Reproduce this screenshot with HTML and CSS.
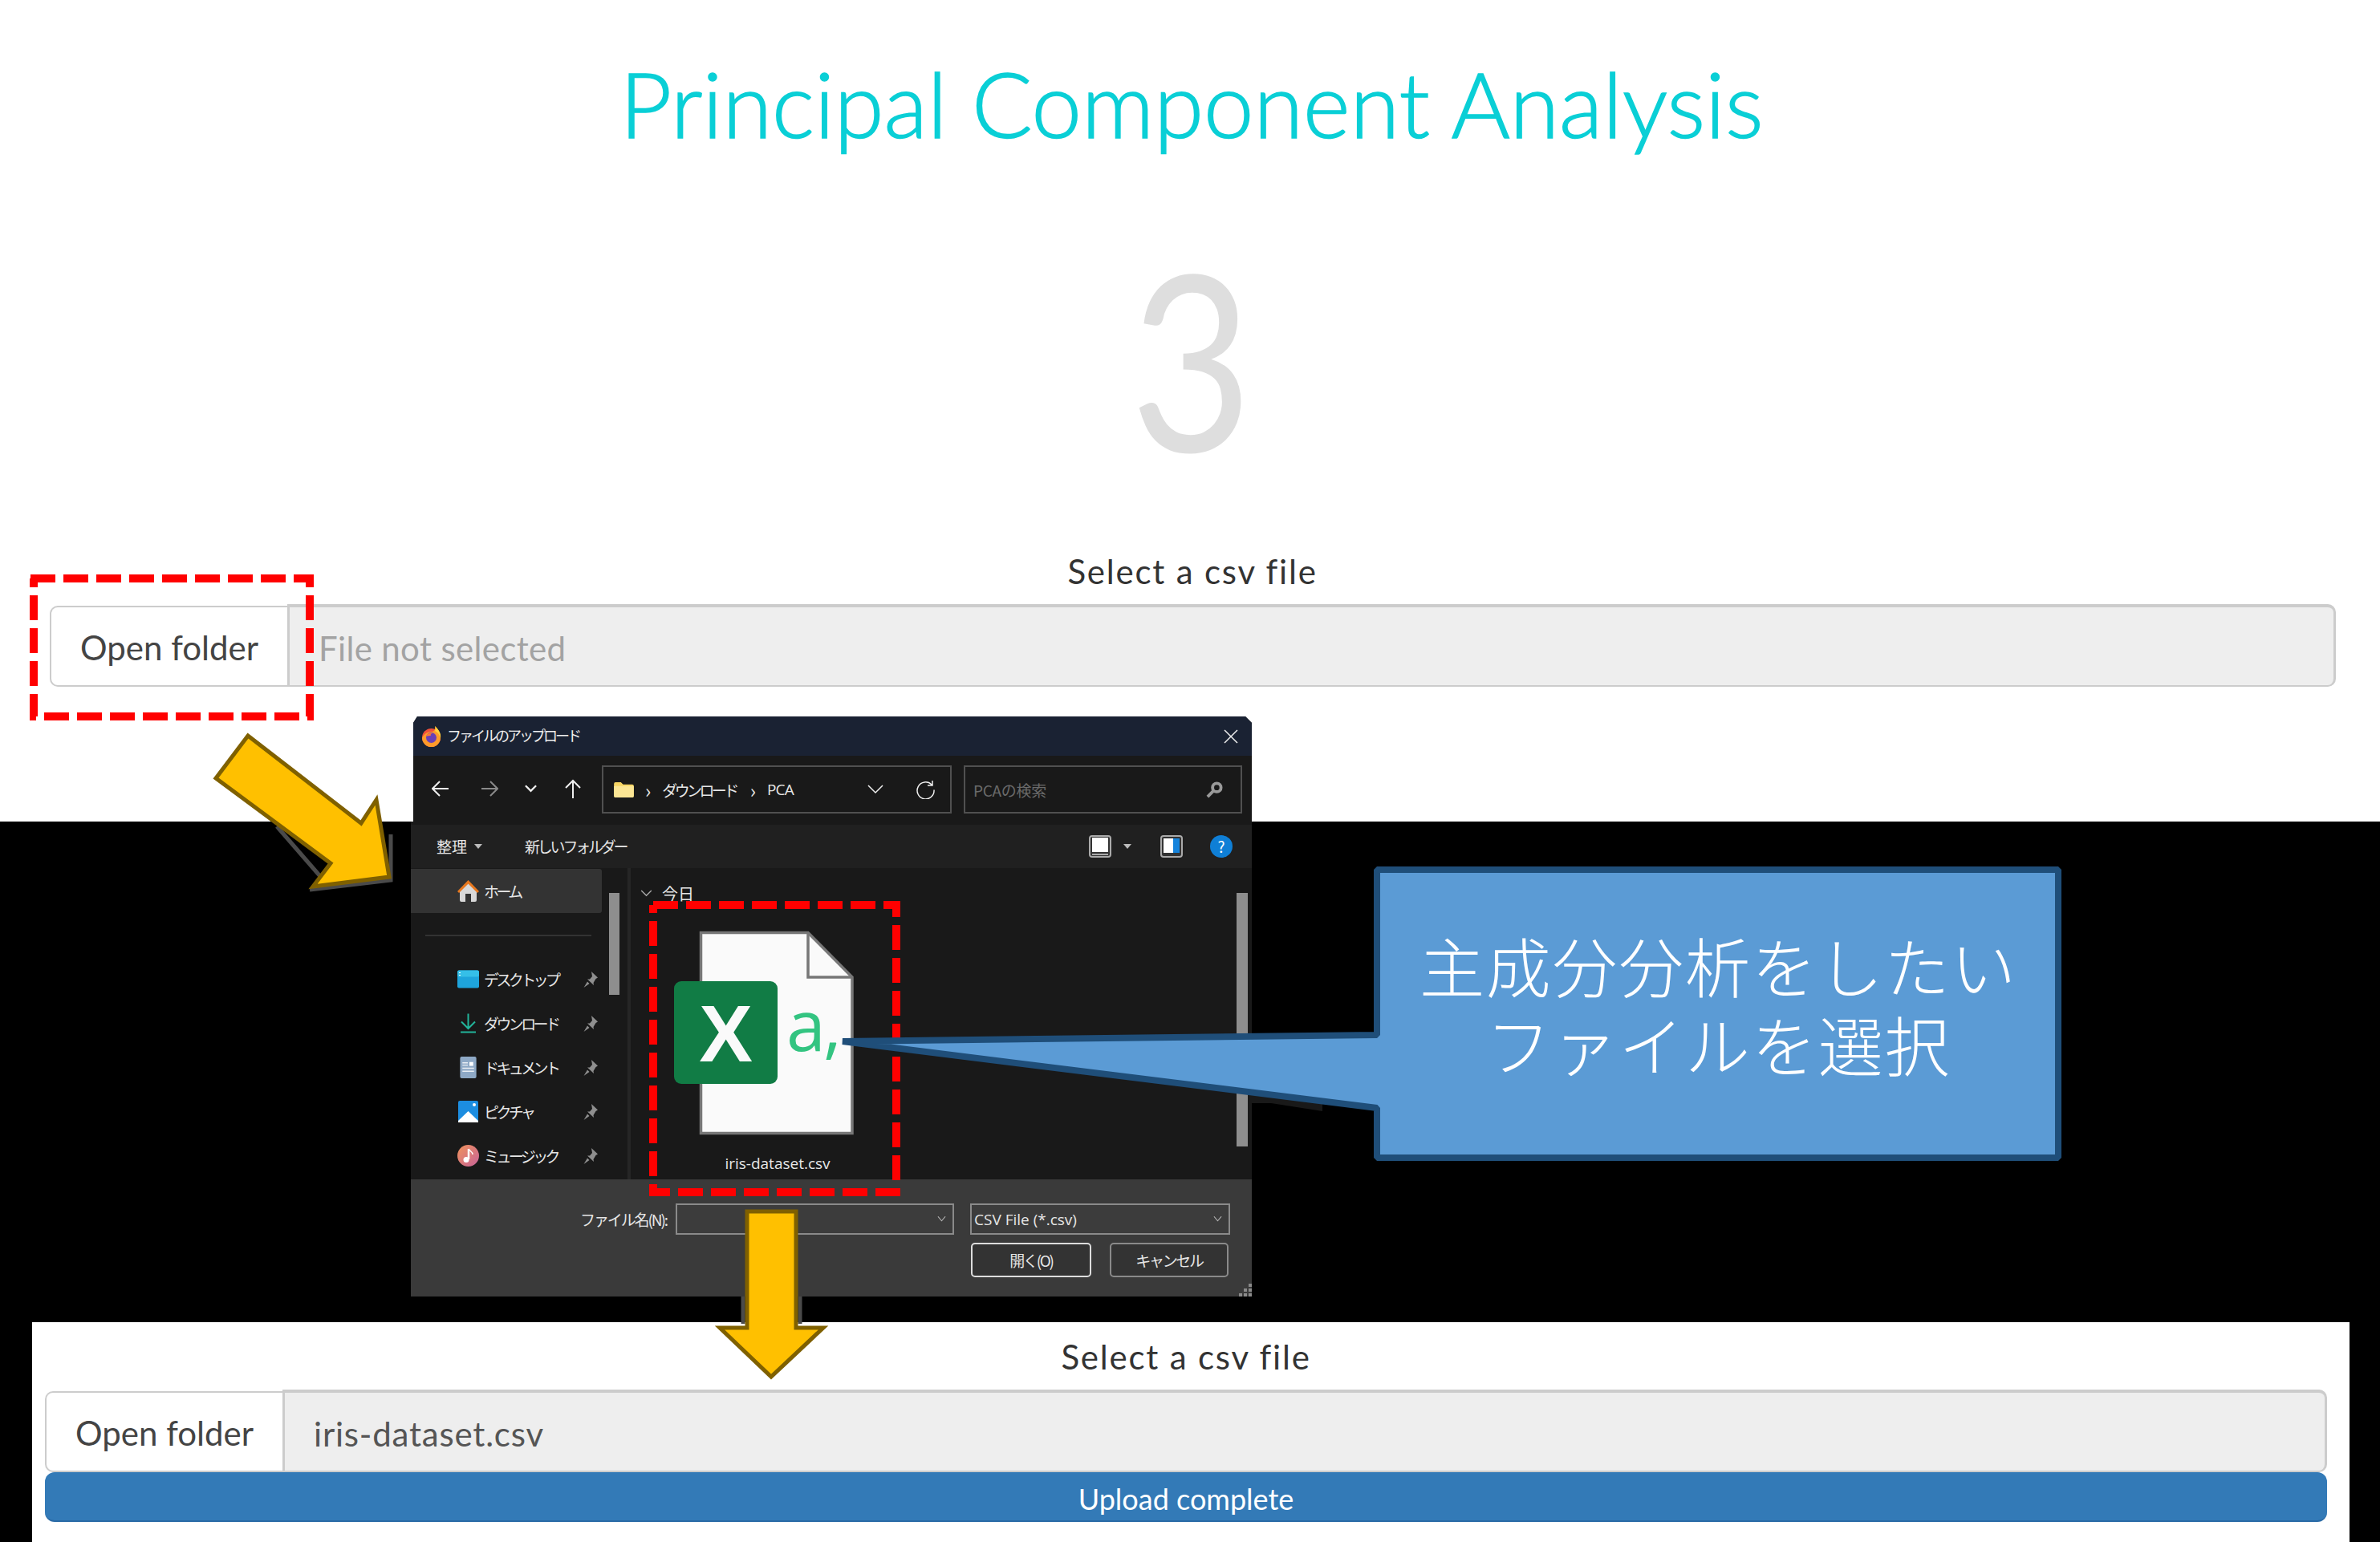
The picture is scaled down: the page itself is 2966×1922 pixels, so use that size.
FILE: index.html
```html
<!DOCTYPE html>
<html lang="en">
<head>
<meta charset="utf-8">
<title>Principal Component Analysis</title>
<link rel="stylesheet" href="styles.css">
</head>
<body>
<div class="page">
  <section class="top">
    <h1 class="title">Principal Component Analysis</h1>
    <div class="step">3</div>
    <label class="label label-top">Select a csv file</label>
    <div class="group group-top">
      <div class="open">Open folder</div>
      <div class="field placeholder">File not selected</div>
    </div>
  </section>

  <div class="band"></div>

  <section class="lower">
    <label class="label">Select a csv file</label>
    <div class="group">
      <div class="open">Open folder</div>
      <div class="field value">iris-dataset.csv</div>
    </div>
    <div class="bar">Upload complete</div>
  </section>

  <div class="dialog">
    <div class="d-title">
      <svg class="ff" viewBox="0 0 26 26">
        <circle cx="12.5" cy="14.5" r="11.5" fill="#f0503a"/>
        <path d="M1 14.5A11.5 11.5 0 0 0 24 14.5C24 8 21 4 17 0c1 4-1 6-3 7-5 0-9 1-13 7.500z" fill="#ff9a2a"/>
        <path d="M17 0c4 4 8 8 7 15-1-4-3-7-7-9 1-2 1-4 0-6z" fill="#ffd23a"/>
        <circle cx="12.500" cy="14.500" r="6.500" fill="#6a3fb5"/>
        <path d="M6 12c2-3 6-4 9-3-3 0-4 2-3 3-3 0-4 1-6 0z" fill="#ff7a30"/>
      </svg>
      <span class="d-caption">ファイルのアップロード</span>
      <svg class="close" viewBox="0 0 18 18"><path d="M1 1l16 16M17 1L1 17"/></svg>
    </div>

    <div class="d-nav">
      <svg class="ic back" viewBox="0 0 22 22"><path d="M21 11H2M10 2l-9 9 9 9"/></svg>
      <svg class="ic fwd" viewBox="0 0 22 22"><path d="M1 11h19M12 2l9 9-9 9"/></svg>
      <svg class="ic drop" viewBox="0 0 16 10"><path d="M1 1l7 7 7-7"/></svg>
      <svg class="ic up" viewBox="0 0 22 24"><path d="M11 24V2M2 11l9-9 9 9"/></svg>
      <div class="address">
        <svg class="folder" viewBox="0 0 26 20"><path d="M0 2q0-2 2-2h7l3 3h12q2 0 2 2v13q0 2-2 2H2q-2 0-2-2z" fill="#f6d463"/><path d="M0 5h26v13q0 2-2 2H2q-2 0-2-2z" fill="#fbe594"/></svg>
        <span class="crumb-sep">›</span>
        <span class="crumb">ダウンロード</span>
        <span class="crumb-sep">›</span>
        <span class="crumb crumb-last">PCA</span>
        <svg class="ic addr-drop" viewBox="0 0 20 12"><path d="M1 1l9 9 9-9"/></svg>
        <svg class="ic refresh" viewBox="0 0 24 24"><path d="M20 6a10.500 10.500 0 1 0 3 6.500M21 1v6h-6"/></svg>
      </div>
      <div class="search">
        <span class="search-text">PCAの検索</span>
        <svg class="lens" viewBox="0 0 22 22"><circle cx="14" cy="8" r="5.500" fill="none" stroke="#9a9a9a" stroke-width="4"/><path d="M10 12l-8 8" stroke="#9a9a9a" stroke-width="4"/></svg>
      </div>
    </div>

    <div class="d-cmd">
      <span class="cmd-a">整理</span>
      <i class="tri"></i>
      <span class="cmd-b">新しいフォルダー</span>
      <svg class="view" viewBox="0 0 28 28"><rect x="1" y="1" width="26" height="26" rx="3" fill="#333" stroke="#aaa" stroke-width="2"/><rect x="4" y="3" width="20" height="18" fill="#fff"/><path d="M4 24h20" stroke="#aaa" stroke-width="2"/></svg>
      <i class="tri tri-view"></i>
      <svg class="pane" viewBox="0 0 28 28"><rect x="1" y="1" width="26" height="26" rx="3" fill="#333" stroke="#aaa" stroke-width="2"/><rect x="4" y="4" width="12" height="18" fill="#fff"/><rect x="16" y="4" width="8" height="18" fill="#1583dc"/></svg>
      <div class="help">?</div>
    </div>

    <div class="d-main">
      <aside class="side">
        <div class="home">
          <svg class="s-ic" viewBox="0 0 27 27"><path d="M3 14v11q0 2 2 2h5V17h7v10h5q2 0 2-2V14L13.500 4z" fill="#d9d9d9"/><path d="M0 14L13.500 0 27 14l-2 2L13.500 4.500 2 16z" fill="#e8781e"/></svg>
          <span>ホーム</span>
        </div>
        <div class="side-sep"></div>
        <div class="item">
          <svg class="s-ic" viewBox="0 0 27 22"><rect width="27" height="22" rx="2" fill="#1ea4dc"/><rect width="27" height="8" rx="2" fill="#35bfe8"/><path d="M2 3h2M2 6h2" stroke="#fff"/></svg>
          <span>デスクトップ</span>
          <svg class="pin" viewBox="0 0 18 20"><path d="M10 0L18 7.500 15.500 9 12.500 14 13 17 5 9.500 8 9.500 11 6z M5 12.500l2.500 2.500L0.500 20z"/></svg>
        </div>
        <div class="item">
          <svg class="s-ic" viewBox="0 0 27 24"><path d="M13.500 0v18M5 10l8.500 8.500L22 10" fill="none" stroke="#22b59b" stroke-width="2"/><path d="M4 23h19" stroke="#22b59b" stroke-width="2"/></svg>
          <span>ダウンロード</span>
          <svg class="pin" viewBox="0 0 18 20"><path d="M10 0L18 7.500 15.500 9 12.500 14 13 17 5 9.500 8 9.500 11 6z M5 12.500l2.500 2.500L0.500 20z"/></svg>
        </div>
        <div class="item">
          <svg class="s-ic" viewBox="0 0 27 28"><rect x="3" width="21" height="28" rx="2" fill="#8ea9c6"/><path d="M6 8h7M6 11h7M6 15h15M6 19h15" stroke="#e9eef4" stroke-width="1.500"/><rect x="15" y="7" width="5" height="5" fill="#fff"/></svg>
          <span>ドキュメント</span>
          <svg class="pin" viewBox="0 0 18 20"><path d="M10 0L18 7.500 15.500 9 12.500 14 13 17 5 9.500 8 9.500 11 6z M5 12.500l2.500 2.500L0.500 20z"/></svg>
        </div>
        <div class="item">
          <svg class="s-ic" viewBox="0 0 27 27"><rect x="1" width="25" height="27" rx="2" fill="#1c8de0"/><path d="M1 25L13.500 13 26 25v2H1z" fill="#fff"/><circle cx="21" cy="5" r="2" fill="#fff"/></svg>
          <span>ピクチャ</span>
          <svg class="pin" viewBox="0 0 18 20"><path d="M10 0L18 7.500 15.500 9 12.500 14 13 17 5 9.500 8 9.500 11 6z M5 12.500l2.500 2.500L0.500 20z"/></svg>
        </div>
        <div class="item">
          <svg class="s-ic" viewBox="0 0 27 27"><defs><linearGradient id="mus" x1="0" y1="0" x2="1" y2="1"><stop offset="0" stop-color="#f0935a"/><stop offset="1" stop-color="#c7629a"/></linearGradient></defs><circle cx="13.500" cy="13.500" r="13.500" fill="url(#mus)"/><path d="M14 5v13" stroke="#fff" stroke-width="2.500"/><path d="M14 5c1 3 5 3 5 7" stroke="#fff" fill="none" stroke-width="1.500"/><circle cx="11" cy="18.500" r="3.500" fill="#fff"/></svg>
          <span>ミュージック</span>
          <svg class="pin" viewBox="0 0 18 20"><path d="M10 0L18 7.500 15.500 9 12.500 14 13 17 5 9.500 8 9.500 11 6z M5 12.500l2.500 2.500L0.500 20z"/></svg>
        </div>
        <i class="side-scroll"></i>
      </aside>
      <div class="content">
        <div class="today">
          <svg class="today-ic" viewBox="0 0 16 10"><path d="M1 1l7 7 7-7"/></svg>
          <span>今日</span>
        </div>
        <div class="tile">
          <svg class="doc" viewBox="0 0 223 253">
            <path class="sheet" d="M33.500 1.500H167L222 57V251.500H33.500z"/>
            <path class="fold" d="M167 1.500V57H222"/>
            <rect class="badge" x="0" y="62" width="129" height="128" rx="9"/>
            <text class="x" x="64.500" y="162">X</text>
            <text class="a" x="140" y="149">a,</text>
          </svg>
          <div class="tile-name">iris-dataset.csv</div>
        </div>
        <i class="main-scroll"></i>
      </div>
    </div>

    <div class="d-foot">
      <div class="foot-row">
        <span class="foot-label">ファイル名(N):</span>
        <div class="combo combo-name"><svg class="combo-ic" viewBox="0 0 12 8"><path d="M1 1l5 6 5-6"/></svg></div>
        <div class="combo combo-type"><span>CSV File (*.csv)</span><svg class="combo-ic" viewBox="0 0 12 8"><path d="M1 1l5 6 5-6"/></svg></div>
      </div>
      <div class="foot-row foot-btns">
        <div class="btn btn-main">開く(O)</div>
        <div class="btn">キャンセル</div>
      </div>
      <svg class="grip" viewBox="0 0 16 16"><path d="M12 0h4v4h-4zM6 6h4v4H6zM12 6h4v4h-4zM0 12h4v4H0zM6 12h4v4h-4zM12 12h4v4h-4z"/></svg>
    </div>
  </div>

  <svg class="marks" viewBox="0 0 2966 1922">
    <path class="dash" d="M38 721H386V893H42V721"/>
    <path class="dash" d="M814 1128H1117V1486H814V1128"/>
    <path class="ghost" d="M345 1030L411 1106M386 1109L487 1097L487 1040"/>
    <path class="ghost" d="M926 1616V1650M997 1616V1650"/>
    <polygon class="stair" points="1560,1350 1584,1350 1584,1366 1648,1366 1648,1385 1584,1375 1560,1375"/>
    <polygon class="arrow" points="309,917 450,1026 469,997 485,1093 390,1105 412,1076 269,970"/>
    <polygon class="arrow" points="931,1510 992,1510 992,1655 1026,1655 961,1716 897,1655 931,1655"/>
    <polygon class="callout" points="1716,1084 2565,1084 2565,1443 1716,1443 1716,1381 1050,1298 1716,1290"/>
  </svg>
  <div class="callout-text">主成分分析をしたい<br>ファイルを選択</div>
</div>
</body>
</html>
```
FILE: styles.css
```css
* { box-sizing: border-box; }
html, body { margin: 0; padding: 0; }
body { font-family: "Lato", "Noto Sans CJK JP", sans-serif; background: #000; }

.page {
  position: relative;
  width: 2966px;
  height: 1922px;
  display: flex;
  flex-direction: column;
  overflow: hidden;
  background: #000;
}

.top {
  height: 1024px;
  background: #fff;
  display: flex;
  flex-direction: column;
  align-items: center;
  padding-top: 54px;
}
.title {
  margin: 0 0 0 4px;
  font-size: 112px;
  line-height: 150px;
  font-weight: 300;
  color: #0acfd6;
  -webkit-text-stroke: 1.500px #0acfd6;
  letter-spacing: 0;
  white-space: nowrap;
}
.step {
  margin-top: 91px;
  height: 300px;
  line-height: 300px;
  font-size: 306px;
  font-weight: 400;
  color: #dedede;
  transform: scaleX(0.86);
  margin-left: 4px;
}
.label {
  display: block;
  font-size: 42px;
  line-height: 56px;
  color: #333;
  letter-spacing: 1.800px;
  text-align: center;
  white-space: nowrap;
}
.label-top { margin: 89px 0 0 6px; }
.group {
  display: flex;
  align-self: stretch;
  height: 103px;
  margin-top: 13px;
}
.group-top { margin-left: 62px; margin-right: 55px; }
.open {
  width: 296px;
  height: 101px;
  margin-top: 2px;
  padding-top: 3px;
  flex: none;
  display: flex;
  align-items: center;
  justify-content: center;
  background: #fff;
  border: 2px solid #ccc;
  border-right: 0;
  border-radius: 10px 0 0 10px;
  font-size: 42px;
  letter-spacing: 0;
  color: #444;
}
.field {
  flex: 1;
  display: flex;
  align-items: center;
  background: #eee;
  border: 3px solid #ccc;
  border-top-width: 4px;
  border-bottom-width: 2px;
  border-radius: 0 10px 10px 0;
  padding-left: 36px;
  font-size: 42px;
  padding-top: 4px;
}
.placeholder { color: #a3a3a3; letter-spacing: 0.350px; }
.value { color: #555; letter-spacing: 0.800px; }

.band { height: 624px; background: #000; }

.lower {
  height: 274px;
  margin-left: 40px;
  margin-right: 38px;
  padding: 15px 28px 0 16px;
  background: #fff;
  display: flex;
  flex-direction: column;
}
.bar {
  height: 62px;
  background: #337ab7;
  border-bottom: 2px solid #2a6aa6;
  border-radius: 12px;
  color: #fff;
  font-size: 36px;
  letter-spacing: 0;
  line-height: 66px;
  text-align: center;
}

/* Windows file dialog */
.dialog {
  position: absolute;
  left: 512px;
  top: 893px;
  width: 1048px;
  height: 723px;
  display: flex;
  flex-direction: column;
  background: #191919;
  color: #e6e6e6;
  font-family: "Noto Sans CJK JP", "Noto Sans", sans-serif;
  clip-path: polygon(3px 8px, 8px 0, 1040px 0, 1048px 8px, 1048px 100%, 0 100%, 0 131px, 3px 131px);
}
.d-title {
  height: 49px;
  flex: none;
  display: flex;
  align-items: center;
  padding-left: 13px;
  background: #1a2233;
}
.ff { width: 26px; height: 26px; }
.d-caption { margin-left: 6px; margin-top: -3px; font-size: 18px; letter-spacing: -3px; color: #eee; }
.close { width: 18px; height: 18px; margin-left: auto; margin-right: 17px; fill: none; stroke: #eee; stroke-width: 1.500; }

.d-nav {
  height: 86px;
  flex: none;
  display: flex;
  align-items: flex-start;
  padding-top: 12px;
  background: #191919;
  position: relative;
}
.ic { fill: none; stroke: #eee; stroke-width: 2; flex: none; }
.back { width: 22px; height: 22px; margin: 18px 0 0 26px; }
.fwd { width: 22px; height: 22px; margin: 18px 0 0 39px; stroke: #8a8a8a; }
.drop { width: 15px; height: 10px; margin: 24px 0 0 33px; stroke-width: 2.500; }
.up { width: 22px; height: 24px; margin: 17px 0 0 34px; }
.address {
  width: 436px;
  height: 60px;
  margin-left: 25px;
  border: 2px solid #505050;
  display: flex;
  align-items: center;
  padding-left: 13px;
  font-size: 19px;
}
.folder { width: 25px; height: 19px; flex: none; }
.crumb-sep { margin: 0 14px; font-size: 24px; }
.crumb { letter-spacing: -3.600px; margin-right: 3px; }
.crumb-last { letter-spacing: -0.800px; font-family: "Open Sans", sans-serif; }
.addr-drop { width: 20px; height: 12px; margin-left: auto; stroke-width: 1.500; }
.refresh { width: 24px; height: 24px; margin-left: 40px; margin-right: 19px; stroke-width: 1.500; }
.search {
  width: 347px;
  height: 60px;
  margin-left: 15px;
  border: 2px solid #505050;
  display: flex;
  align-items: center;
  padding: 0 22px 0 10px;
  color: #6a6a6a;
  font-size: 19px;
}
.search-text { letter-spacing: -0.300px; }
.lens { width: 21px; height: 21px; margin-left: auto; }

.d-cmd {
  height: 54px;
  flex: none;
  display: flex;
  align-items: center;
  padding-left: 32px;
  background: #202020;
  font-size: 19px;
}
.cmd-a { letter-spacing: 0; margin-top: -2px; }
.tri {
  width: 0;
  height: 0;
  margin-left: 9px;
  border-left: 5px solid transparent;
  border-right: 5px solid transparent;
  border-top: 6px solid #bbb;
}
.cmd-b { margin-left: 53px; letter-spacing: -3.200px; margin-top: -2px; }
.view { width: 28px; height: 28px; margin-left: auto; }
.tri-view { margin-left: 15px; }
.pane { width: 28px; height: 28px; margin-left: 36px; }
.help {
  width: 28px;
  height: 28px;
  margin-left: 34px;
  margin-right: 24px;
  border-radius: 50%;
  background: #0f7fd6;
  color: #fff;
  font-size: 19px;
  line-height: 28px;
  text-align: center;
}

.d-main { height: 388px; flex: none; display: flex; background: #191919; }
.side {
  position: relative;
  width: 274px;
  flex: none;
  border-right: 4px solid #262626;
  font-size: 19px;
  letter-spacing: -3.600px;
}
.home {
  width: 238px;
  height: 55px;
  margin-top: 1px;
  display: flex;
  align-items: center;
  padding-left: 58px;
  background: #333;
  border-radius: 0 3px 3px 0;
}
.s-ic { width: 27px; height: 27px; flex: none; margin-right: 6px; }
.side-sep { width: 207px; height: 2px; margin: 27px 0 26px 18px; background: #333; }
.item {
  height: 55px;
  display: flex;
  align-items: center;
  padding: 0 37px 0 58px;
  white-space: nowrap;
}
.pin { width: 18px; height: 20px; margin-left: auto; flex: none; fill: #8f8f8f; }
.side-scroll {
  position: absolute;
  left: 247px;
  top: 31px;
  width: 13px;
  height: 127px;
  background: #8e8e8e;
}
.content { position: relative; flex: 1; padding-top: 16px; }
.today {
  height: 30px;
  display: flex;
  align-items: center;
  padding-left: 12px;
  font-size: 20px;
}
.today-ic { width: 15px; height: 9px; margin-right: 12px; fill: none; stroke: #aaa; stroke-width: 1.500; }
.tile { width: 258px; margin: 33px 0 0 54px; }
.doc { width: 223px; height: 253px; display: block; overflow: visible; }
.sheet { fill: #fafafa; stroke: #777; stroke-width: 3.500; }
.fold { fill: none; stroke: #777; stroke-width: 3.500; }
.badge { fill: #117c45; }
.x { font-family: "Liberation Sans", sans-serif; font-weight: 700; font-size: 100px; text-anchor: middle; fill: #fafafa; }
.a { font-family: "Open Sans", sans-serif; font-size: 88px; letter-spacing: -3px; fill: #33c481; }
.tile-name { margin-top: 22px; text-align: center; font-family: "Open Sans", sans-serif; font-size: 19px; line-height: 28px; color: #e6e6e6; white-space: nowrap; }
.main-scroll {
  position: absolute;
  right: 5px;
  top: 31px;
  width: 14px;
  height: 316px;
  background: #8e8e8e;
}

.d-foot {
  position: relative;
  height: 146px;
  flex: none;
  padding: 30px 27px 0 211px;
  background: #3a3a3a;
  font-size: 19px;
}
.foot-row { display: flex; align-items: flex-start; }
.foot-label { width: 119px; height: 39px; line-height: 39px; letter-spacing: -2.100px; white-space: nowrap; }
.combo {
  position: relative;
  height: 39px;
  border: 2px solid #8a8a8a;
  background: #3c3c3c;
  display: flex;
  align-items: center;
  padding-left: 3px;
  font-family: "Open Sans", sans-serif;
  font-size: 19px;
  letter-spacing: 0;
}
.combo-name { width: 347px; }
.combo-type { width: 324px; margin-left: 20px; }
.combo-ic { position: absolute; right: 8px; top: 13px; width: 11px; height: 8px; fill: none; stroke: #bbb; stroke-width: 1.200; }
.foot-btns { justify-content: flex-end; gap: 23px; margin-top: 10px; margin-right: 2px; }
.btn {
  width: 148px;
  height: 43px;
  border: 2px solid #8a8a8a;
  border-radius: 5px;
  background: #333;
  text-align: center;
  line-height: 39px;
  letter-spacing: -2.300px;
}
.btn-main { width: 150px; border-color: #ddd; }
.grip { position: absolute; right: 0; bottom: 0; width: 16px; height: 16px; fill: #8a8a8a; }

/* Slide annotations */
.marks { position: absolute; left: 0; top: 0; width: 2966px; height: 1922px; pointer-events: none; }
.dash { fill: none; stroke: #ff0000; stroke-width: 10; stroke-dasharray: 31 10; }
.arrow { fill: #ffc000; stroke: #7f6000; stroke-width: 5; }
.ghost { fill: none; stroke: #4a4a4a; stroke-width: 5; }
.stair { fill: #191919; }
.callout { fill: #5b9bd5; stroke: #1f4e79; stroke-width: 8; stroke-linejoin: bevel; }
.callout-text {
  position: absolute;
  left: 1720px;
  top: 1153px;
  width: 843px;
  font-family: "Noto Sans CJK JP", sans-serif;
  font-weight: 300;
  font-size: 81px;
  line-height: 98px;
  letter-spacing: 1.800px;
  color: #fff;
  text-align: center;
}
```
